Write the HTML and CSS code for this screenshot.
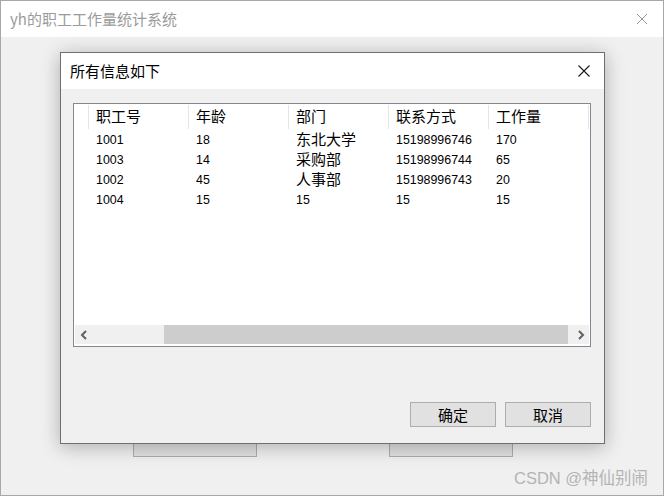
FILE: index.html
```html
<!DOCTYPE html>
<html lang="zh-CN">
<head>
<meta charset="utf-8">
<title>yh的职工工作量统计系统</title>
<link rel="stylesheet" href="styles.css">
</head>
<body>
<div class="app">
  <div class="win">
    <div class="win-title">
      <span class="win-title-text">yh的职工工作量统计系统</span>
      <svg class="win-close" width="12" height="12" viewBox="0 0 12 12"><path d="M1 1 L11 11 M11 1 L1 11" stroke="#9a9a9a" stroke-width="1" fill="none"/></svg>
    </div>
    <div class="win-body">
      <div class="win-buttons">
        <div class="win-btn"></div>
        <div class="win-btn"></div>
      </div>
    </div>
  </div>

  <div class="dialog">
    <div class="dlg-title">
      <span class="dlg-title-text">所有信息如下</span>
      <svg class="dlg-close" width="12" height="12" viewBox="0 0 12 12"><path d="M0.5 0.5 L11.5 11.5 M11.5 0.5 L0.5 11.5" stroke="#1a1a1a" stroke-width="1.1" fill="none"/></svg>
    </div>
    <div class="dlg-body">
      <div class="list">
        <div class="list-head">
          <div class="hcell"></div>
          <div class="hcell">职工号</div>
          <div class="hcell">年龄</div>
          <div class="hcell">部门</div>
          <div class="hcell">联系方式</div>
          <div class="hcell">工作量</div>
        </div>
        <div class="list-rows">
          <div class="row">
            <div class="cell"></div><div class="cell">1001</div><div class="cell">18</div><div class="cell zh">东北大学</div><div class="cell">15198996746</div><div class="cell">170</div>
          </div>
          <div class="row">
            <div class="cell"></div><div class="cell">1003</div><div class="cell">14</div><div class="cell zh">采购部</div><div class="cell">15198996744</div><div class="cell">65</div>
          </div>
          <div class="row">
            <div class="cell"></div><div class="cell">1002</div><div class="cell">45</div><div class="cell zh">人事部</div><div class="cell">15198996743</div><div class="cell">20</div>
          </div>
          <div class="row">
            <div class="cell"></div><div class="cell">1004</div><div class="cell">15</div><div class="cell">15</div><div class="cell">15</div><div class="cell">15</div>
          </div>
        </div>
        <div class="hscroll">
          <div class="arrow">
            <svg width="8" height="10" viewBox="0 0 8 10"><path d="M6 1 L2 5 L6 9" stroke="#606060" stroke-width="2" fill="none"/></svg>
          </div>
          <div class="track"><div class="thumb"></div></div>
          <div class="arrow">
            <svg width="8" height="10" viewBox="0 0 8 10"><path d="M2 1 L6 5 L2 9" stroke="#606060" stroke-width="2" fill="none"/></svg>
          </div>
        </div>
      </div>
      <div class="dlg-buttons">
        <button class="btn">确定</button>
        <button class="btn">取消</button>
      </div>
    </div>
  </div>

  <div class="watermark">CSDN @神仙别闹</div>
</div>
</body>
</html>
```

FILE: styles.css
```css
* { box-sizing: border-box; }
html, body { margin: 0; padding: 0; background: #ffffff; }
body {
  font-family: "Noto Sans CJK SC", "Liberation Sans", sans-serif;
  width: 664px;
  height: 497px;
  overflow: hidden;
}
.app {
  position: relative;
  width: 664px;
  height: 497px;
}
.win {
  width: 664px;
  height: 496px;
  border: 1px solid #a8a8a8;
  display: flex;
  flex-direction: column;
  background: #f0f0f0;
}
.win-title {
  height: 36px;
  background: #ffffff;
  display: flex;
  align-items: center;
  justify-content: space-between;
  padding: 0 15px 0 9px;
  flex: none;
}
.win-title-text {
  font-size: 15px;
  color: #9b9b9b;
  line-height: 20px;
}
.win-close { display: block; }
.win-body {
  flex: 1;
  display: flex;
  flex-direction: column;
  justify-content: flex-end;
  padding: 0 0 38px 132px;
}
.win-buttons {
  display: flex;
  gap: 132px;
}
.win-btn {
  width: 124px;
  height: 25px;
  background: #e1e1e1;
  border: 1px solid #adadad;
}

.dialog {
  position: absolute;
  left: 60px;
  top: 52px;
  width: 545px;
  height: 392px;
  border: 1px solid #6f6f6f;
  background: #f0f0f0;
  box-shadow: 0 3px 18px rgba(0, 0, 0, 0.28);
  display: flex;
  flex-direction: column;
}
.dlg-title {
  height: 36px;
  background: #ffffff;
  display: flex;
  align-items: center;
  justify-content: space-between;
  padding: 0 14px 0 9px;
  flex: none;
}
.dlg-title-text {
  font-size: 15px;
  color: #000000;
  line-height: 20px;
}
.dlg-close { display: block; }
.dlg-body {
  flex: 1;
  display: flex;
  flex-direction: column;
  padding: 14px 13px 16px 12px;
}
.list {
  width: 518px;
  height: 244px;
  border: 1px solid #828790;
  background: #ffffff;
  padding: 1px;
  display: flex;
  flex-direction: column;
}
.list-head, .row {
  display: grid;
  grid-template-columns: 14px repeat(5, 100px);
}
.list-head {
  height: 24px;
  flex: none;
}
.hcell {
  border-right: 1px solid #e5e5e5;
  padding-left: 7px;
  font-size: 15px;
  line-height: 21px;
  color: #000000;
}
.hcell:first-child { padding-left: 0; }
.list-rows {
  flex: 1;
  padding-top: 1px;
}
.row {
  height: 20px;
}
.cell {
  padding-left: 7px;
  font-family: "Liberation Sans", "Noto Sans CJK SC", sans-serif;
  font-size: 12.4px;
  line-height: 20px;
  color: #000000;
  white-space: nowrap;
}
.cell:first-child { padding-left: 0; }
.cell.zh {
  font-family: "Noto Sans CJK SC", sans-serif;
  font-size: 15px;
  line-height: 18px;
}
.hscroll {
  height: 19px;
  flex: none;
  margin-bottom: 1px;
  background: #f0f0f0;
  display: flex;
  align-items: stretch;
}
.arrow {
  width: 17px;
  display: flex;
  align-items: center;
  justify-content: center;
  flex: none;
}
.track {
  flex: 1;
  padding: 0 4px 0 72px;
  display: flex;
}
.thumb {
  flex: 1;
  background: #cdcdcd;
}
.dlg-buttons {
  margin-top: auto;
  display: flex;
  justify-content: flex-end;
  gap: 9px;
}
.btn {
  width: 86px;
  height: 25px;
  background: #e1e1e1;
  border: 1px solid #adadad;
  font-family: "Noto Sans CJK SC", sans-serif;
  font-size: 15px;
  color: #000000;
  padding: 0;
  line-height: 21px;
}
.watermark {
  position: absolute;
  left: 514px;
  top: 467px;
  font-family: "Liberation Sans", "Noto Sans CJK SC", sans-serif;
  font-size: 16.5px;
  color: #b4b4b4;
  line-height: 22px;
  white-space: nowrap;
}
```
